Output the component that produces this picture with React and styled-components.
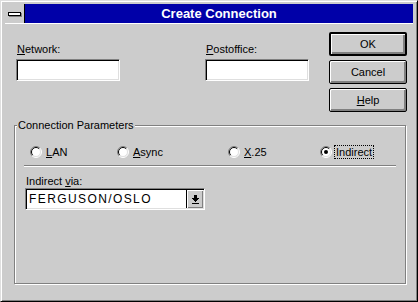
import styled, { createGlobalStyle } from "styled-components";

const GlobalStyle = createGlobalStyle`
  html, body {
    margin: 0;
    padding: 0;
    background: #cccccc;
  }
  body {
    font-family: "Liberation Sans", Arial, sans-serif;
    font-size: 11px;
    color: #000;
  }
`;

const Window = styled.div`
  box-sizing: border-box;
  width: 418px;
  height: 302px;
  background: #cccccc;
  border: 1px solid;
  border-color: #dfdfdf #000 #000 #dfdfdf;
  box-shadow: inset 1px 1px 0 #fff, inset -1px -1px 0 #808080;
  padding: 3px 4px 4px 4px;
  display: flex;
  flex-direction: column;
`;

const TitleBar = styled.div`
  display: flex;
  height: 19px;
  border-bottom: 1px solid #fff;
`;

const SysMenu = styled.div`
  width: 19px;
  background: #cccccc;
  border-right: 1px solid #000;
  display: flex;
  align-items: center;
  justify-content: center;
`;

const SysBar = styled.div`
  box-sizing: border-box;
  width: 13px;
  height: 4px;
  background: #fff;
  border: 1px solid #000;
  box-shadow: 1px 1px 0 #808080;
`;

const Caption = styled.div`
  flex: 1;
  background: #0000a8;
  color: #fff;
  font-weight: bold;
  font-size: 13px;
  line-height: 19px;
  text-align: center;
`;

const Body = styled.div`
  flex: 1;
  padding: 8px 6px 0 9px;
`;

const TopRow = styled.div`
  display: flex;
  align-items: flex-start;
`;

const Fields = styled.div`
  display: flex;
  gap: 85px;
  margin: 11px 0 0 2px;
`;

const Field = styled.div`
  display: flex;
  flex-direction: column;
`;

const Label = styled.label`
  display: block;
  line-height: 13px;
  margin: ${(p) => p.$margin || "0 0 3px 1px"};
`;

const TextInput = styled.div`
  box-sizing: border-box;
  width: ${(p) => p.$width || 104}px;
  height: 22px;
  background: #fff;
  border: 1px solid;
  border-color: #808080 #fff #fff #808080;
  box-shadow: inset 1px 1px 0 #000, inset -1px -1px 0 #dfdfdf;
`;

const Buttons = styled.div`
  margin-left: auto;
  display: flex;
  flex-direction: column;
  gap: 4px;
`;

const Button = styled.button`
  box-sizing: border-box;
  width: 78px;
  height: 24px;
  padding: 0;
  font-family: inherit;
  font-size: 11px;
  color: #000;
  background: #cccccc;
  border: ${(p) => (p.$default ? 2 : 1)}px solid #000;
  border-radius: 2px;
  box-shadow: inset 1px 1px 0 #fff, inset -1px -1px 0 #808080,
    inset -2px -2px 0 #808080;
`;

const Group = styled.div`
  position: relative;
  box-sizing: border-box;
  width: 392px;
  height: 159px;
  margin-top: 13px;
  padding: 18px 9px 0 9px;
  border: 1px solid #808080;
  box-shadow: 1px 1px 0 #fff, inset 1px 1px 0 #fff;
`;

const GroupLabel = styled.span`
  position: absolute;
  top: -7px;
  left: 2px;
  padding: 0 1px;
  line-height: 13px;
  background: #cccccc;
`;

const RadioRow = styled.div`
  display: grid;
  grid-template-columns: 87px 111px 92px auto;
  height: 16px;
  align-items: center;
  margin-left: 6px;
`;

const RadioItem = styled.div`
  display: flex;
  align-items: center;
  gap: 2px;
`;

const RadioText = styled.span`
  line-height: 12px;
  padding: 0 1px;
  border: 1px ${(p) => (p.$focused ? "dotted #000" : "solid transparent")};
`;

const Separator = styled.div`
  margin-top: 5px;
  border-top: 1px solid #808080;
  border-bottom: 1px solid #fff;
`;

const Combo = styled(TextInput)`
  display: flex;
  align-items: stretch;
  margin-left: 1px;
  padding: 1px;
`;

const ComboText = styled.span`
  flex: 1;
  padding-left: 2px;
  line-height: 18px;
  font-size: 12px;
  letter-spacing: 1.4px;
`;

const DropButton = styled.div`
  box-sizing: border-box;
  width: 17px;
  background: #cccccc;
  border-left: 1px solid #000;
  box-shadow: inset 1px 1px 0 #fff, inset -1px -1px 0 #808080;
  display: flex;
  align-items: center;
  justify-content: center;
`;

const Radio = ({ checked }) => (
  <svg width="12" height="12" viewBox="0 0 12 12">
    <circle cx="6" cy="6" r="5" fill="#fff" />
    <path d="M2.1 9.9 A5.5 5.5 0 0 1 9.9 2.1" fill="none" stroke="#808080" />
    <path d="M2.8 9.2 A4.5 4.5 0 0 1 9.2 2.8" fill="none" stroke="#000" />
    <path d="M9.9 2.1 A5.5 5.5 0 0 1 2.1 9.9" fill="none" stroke="#fff" />
    <path d="M9.2 2.8 A4.5 4.5 0 0 1 2.8 9.2" fill="none" stroke="#dfdfdf" />
    {checked && <circle cx="6" cy="6" r="2" fill="#000" />}
  </svg>
);

const DropArrow = () => (
  <svg width="7" height="9" viewBox="0 0 7 9" shapeRendering="crispEdges">
    <rect x="2" y="0" width="3" height="3" fill="#000" />
    <rect x="0" y="3" width="7" height="1" fill="#000" />
    <rect x="1" y="4" width="5" height="1" fill="#000" />
    <rect x="2" y="5" width="3" height="1" fill="#000" />
    <rect x="3" y="6" width="1" height="1" fill="#000" />
    <rect x="0" y="8" width="7" height="1" fill="#000" />
  </svg>
);

const options = [
  { key: "lan", label: <><u>L</u>AN</> },
  { key: "async", label: <><u>A</u>sync</> },
  { key: "x25", label: <><u>X</u>.25</> },
  { key: "indirect", label: <>Indirect</>, checked: true },
];

export default function App() {
  return (
    <>
      <GlobalStyle />
      <Window>
        <TitleBar>
          <SysMenu>
            <SysBar />
          </SysMenu>
          <Caption>Create Connection</Caption>
        </TitleBar>
        <Body>
          <TopRow>
            <Fields>
              <Field>
                <Label>
                  <u>N</u>etwork:
                </Label>
                <TextInput />
              </Field>
              <Field>
                <Label>
                  <u>P</u>ostoffice:
                </Label>
                <TextInput />
              </Field>
            </Fields>
            <Buttons>
              <Button $default>OK</Button>
              <Button>Cancel</Button>
              <Button>
                <u>H</u>elp
              </Button>
            </Buttons>
          </TopRow>
          <Group>
            <GroupLabel>Connection Parameters</GroupLabel>
            <RadioRow>
              {options.map((o) => (
                <RadioItem key={o.key}>
                  <Radio checked={o.checked} />
                  <RadioText $focused={o.checked}>{o.label}</RadioText>
                </RadioItem>
              ))}
            </RadioRow>
            <Separator />
            <Label $margin="8px 0 0 2px">
              Indirect <u>v</u>ia:
            </Label>
            <Combo $width={180}>
              <ComboText>FERGUSON/OSLO</ComboText>
              <DropButton>
                <DropArrow />
              </DropButton>
            </Combo>
          </Group>
        </Body>
      </Window>
    </>
  );
}
